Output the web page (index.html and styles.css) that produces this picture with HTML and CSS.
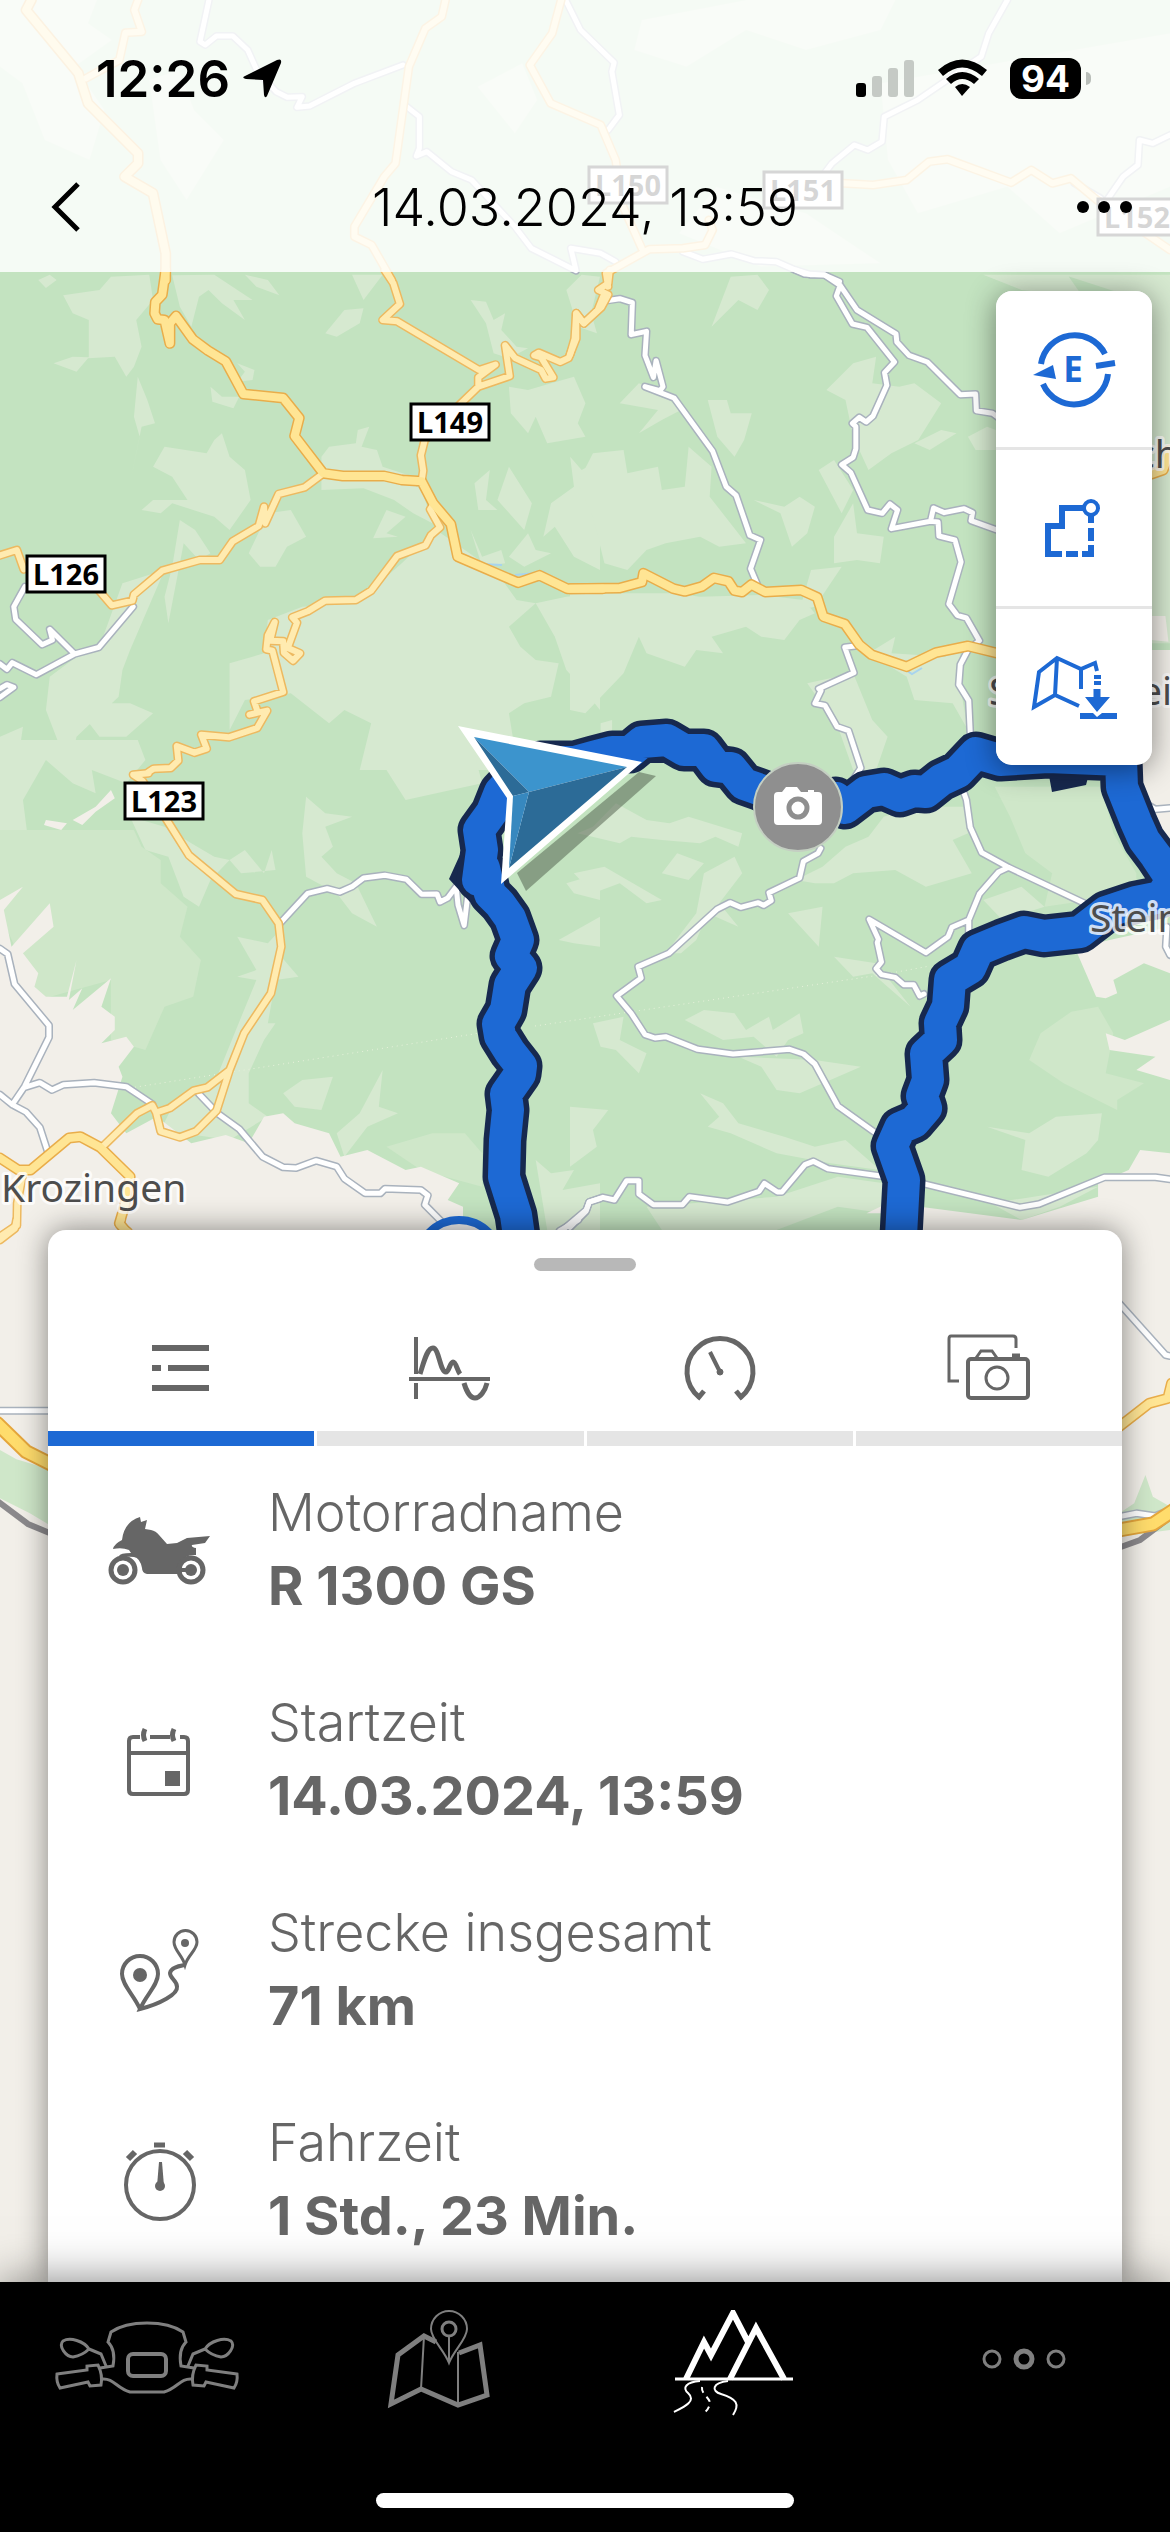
FILE: index.html
```html
<!DOCTYPE html>
<html lang="de">
<head>
<meta charset="utf-8">
<meta name="viewport" content="width=device-width, initial-scale=1">
<title>14.03.2024, 13:59</title>
<link rel="stylesheet" href="styles.css">
</head>
<body>
<div class="app">
  <svg class="map" viewBox="0 0 1170 2532" preserveAspectRatio="xMidYMin slice" role="img" aria-label="Karte">
    <defs>
      <g id="minor">
        <g transform="scale(.7462 .3333)">
          <path d="M280 0L268 125L275 135L290 108L312 108L332 150L345 215L370 275L385 292L405 290L398 322L415 318L475 250L540 195M545 320L562 350L562 445L558 468L572 455L605 515L632 540L690 680L712 745L772 812L765 745L805 760L825 785M758 0L778 90L823 188L820 215L830 345L815 390M1350 0L1325 100L1315 170L1230 300L1185 350L1182 425L1163 450L1145 435L1115 490L1105 520M915 755L942 778L980 762L1010 782L1040 785L1078 822L1105 825L1125 845M1568 405L1545 430L1527 420L1525 495L1505 530L1485 595M1440 550L1475 595"/>
        </g>
        <g transform="translate(0 270) scale(.38265 .33333)">
          <path d="M65 950L36 1010L41 1048L110 1124L137 1110L130 1078L195 1152M348 1010L258 1132L195 1152L95 1214L32 1178L18 1198L0 1182M0 1282L36 1252L18 1244L0 1256"/>
        </g>
        <g transform="translate(570 270) scale(.38265 .33333)">
          <path d="M95 92L130 86L163 98L160 194L200 184L196 256L218 322L225 272L243 350L235 362L196 350L272 384L373 544L408 650L434 676L470 796L498 810L472 896L490 945M590 0L628 14L664 14L706 46L750 120L852 192L854 216L886 256L934 276L1020 374L1060 372L1062 422L1104 430L1140 460M706 46L696 78L738 162L776 172L848 276L822 308L828 346L792 438L774 456L756 442L738 460L747 470L747 536L740 562L710 584L734 608L778 720L816 730L836 702L856 720L840 776L942 754L950 714L978 728L1030 716L1052 728L1048 752L1140 790M942 754L962 756L964 798L1006 810L1022 876L990 1002L1012 1036L1036 1044L1070 1112L1040 1140L1020 1184L1016 1244L1042 1292L1046 1390M745 1128L718 1132L742 1208L650 1256L656 1262L640 1300L666 1306L698 1370L728 1382L760 1494L725 1555"/>
        </g>
        <g transform="translate(0 740) scale(.38265 .33333)">
          <path d="M730 552L804 460L855 446L888 456L920 440L950 414L1006 406L1062 418L1102 463L1142 462L1150 486L1170 474L1192 440L1197 495L1213 556L1222 470M0 626L20 642L38 732L128 856L128 892L64 1040L32 1094M64 1042L104 1028L136 1050L166 1034L246 1028L330 1040L398 1092M0 1064L32 1094L68 1116L104 1162L126 1240M520 1062L568 1120L626 1168L686 1250L740 1282L774 1284L826 1262L880 1280L900 1316L954 1360L994 1360L1006 1346L1100 1350L1118 1366L1110 1394L1160 1452M1460 1480L1532 1410L1540 1386L1568 1376"/>
        </g>
        <g transform="translate(570 740) scale(.38265 .33333)">
          <path d="M655 325L648 340L610 364L600 414L520 458L526 482L506 496L492 488L446 502L418 488L384 508L258 640L178 680L186 714L122 768L160 820L196 884L222 894L250 890L334 928L426 942L574 928L610 942L640 972L700 1098L795 1176M1030 160L1036 180L1046 262L1076 338L1146 382L1345 490M1146 382L1120 396L1070 462L1042 540L1042 580M1042 540L998 562L988 590L930 638L782 538L806 598L803 608L814 666L800 686L814 704L850 712L872 734L898 734L914 768L925 762M1480 175L1530 208L1568 204M1560 560L1557 620L1568 645M0 1462L42 1414L50 1386L86 1372L116 1380L148 1322L180 1322L180 1362L218 1394L294 1394L312 1370L412 1386L494 1354L508 1330L542 1356L554 1356L614 1274L636 1264L674 1286L812 1308M920 1330L1176 1402L1226 1392L1396 1312L1530 1312L1568 1318"/>
        </g>
        <g transform="translate(0 1220) scale(.7462 .3333)">
          <path d="M0 572L70 572M1500 250L1562 405L1568 408M1500 890L1523 880L1548 888L1568 870M750 32L775 0"/>
        </g>
      </g>
      <g id="secondary">
        <g transform="scale(.7462 .3333)">
          <path d="M185 0L180 30L190 95L168 98L160 180L115 235M597 0L592 50L570 85L548 200L530 490L515 530L475 680L475 710L498 735L525 840M752 0L740 100L710 195L738 310L805 375L825 480L835 620L860 745M1130 550L1170 555L1215 540L1245 485L1270 478L1355 548L1382 510L1410 550L1435 535L1470 600L1568 750"/>
          <path d="M950 660L955 690L945 735L915 745L870 748L812 820L815 860"/>
        </g>
        <g transform="translate(0 270) scale(.38265 .33333)">
          <path d="M1005 0L1028 40L1045 102L1000 150L1038 154L1252 300L1295 284L1250 322L1250 350L1205 400L1110 510L1100 556L1106 602L1102 632M1250 350L1332 318L1320 226L1346 264L1414 300L1426 326L1446 322L1414 262L1396 256L1408 248L1464 276L1486 264L1506 206L1506 130L1526 160L1562 120L1576 80M845 610L796 652L728 672L693 760L690 710L676 768L608 814L574 870L522 870L424 902L350 974L346 992L292 1006L250 950M62 898L44 840L0 856M1134 700L1124 718L1150 772L1126 796L1112 826L1038 858L970 962L930 990L850 992L804 1024L764 1042L776 1058L752 1134L784 1150L766 1172L742 1148L740 1114L706 1112L718 1056L700 1096L696 1138L712 1142L740 1266L664 1294L674 1328L698 1322L672 1374L598 1402L526 1394L540 1436L508 1448L462 1428L466 1472L446 1494L402 1496L388 1506M652 1334L674 1328"/>
        </g>
        <g transform="translate(570 270) scale(.38265 .33333)">
          <path d="M104 0L100 40L74 60L100 74L82 112L36 160L16 130L12 206L0 254"/>
        </g>
        <g transform="translate(0 740) scale(.38265 .33333)">
          <path d="M388 100L348 104L372 122L436 240L494 346L616 462L686 480L728 550L735 620L708 760L638 880L600 990L542 1042L506 1052L444 1104L408 1118L398 1096L358 1120L268 1220M600 990L566 1112L512 1174L470 1192L420 1174L408 1118M45 1390L44 1456L0 1490M60 1300L45 1390"/>
        </g>
        <g transform="translate(0 1220) scale(.7462 .3333)">
          <path d="M22 0L20 25L0 60M163 0L160 15L172 34"/>
        </g>
      </g>
      <g id="primary">
        <g transform="scale(.7462 .3333)">
          <path d="M42 0L35 30L105 220L118 310L185 460L185 490L167 530L205 580L222 760L222 840"/>
        </g>
        <g transform="translate(0 270) scale(.38265 .33333)">
          <path d="M433 0L424 74L406 96L404 130L412 148L430 150L444 220L444 160L460 138L504 208L544 242L590 274L636 372L740 384L782 444L770 498L845 610L896 618L1004 618L1050 630L1102 634L1132 700L1178 762L1196 860L1354 938L1410 916L1482 956L1575 956"/>
        </g>
        <g transform="translate(570 270) scale(.38265 .33333)">
          <path d="M0 956L130 954L188 936L192 910L270 956L300 964L344 950L376 924L414 934L430 962L450 966L474 944L510 966L604 960L646 982L662 1040L718 1062L756 1124L788 1154L880 1190L956 1148L1040 1128L1140 1156M1520 612L1550 600L1560 570L1566 540"/>
        </g>
        <g transform="translate(0 740) scale(.38265 .33333)">
          <path d="M0 1254L48 1290L80 1290L180 1194L210 1190L262 1222L340 1310L325 1400L312 1450L330 1475"/>
        </g>
        <g transform="translate(0 1220) scale(.7462 .3333)">
          <path d="M1500 620L1540 550L1565 535L1570 490"/>
        </g>
      </g>
      <g id="trunk" transform="translate(0 1220) scale(.7462 .3333)">
        <path d="M-4 610L35 695L75 740M1500 930L1545 912L1572 872"/>
      </g>
      <path id="route" d="M519 1236L516 1215L504 1177L505 1140L508 1110L506 1094L520 1074L521 1066L510 1052L500 1036L498 1024L506 1010L510 985L521 968L511 956L518 940L510 918L500 904L490 894L484 868L478 880L482 850L479 830L492 812L500 792L515 776L540 762L575 762L593 757L612 752L630 752L642 742L667 740L684 750L704 750L716 766L731 768L744 784L761 790L800 810L822 808L836 798L845 808L866 792L884 789L900 796L914 791L926 792L941 780L958 772L976 753L1000 760L1048 757L1121 760L1122 787L1136 822L1144 840L1156 856L1172 880L1161 897L1136 902L1106 912L1080 932L1044 936L1024 932L1002 940L978 950L970 968L950 980L948 1006L940 1023L941 1040L926 1054L928 1080L922 1096L926 1108L914 1122L900 1128L892 1146L904 1180L901 1236"/>
    </defs>

    <rect class="forest" width="1170" height="2532"/>

    <g class="grove">
      <g transform="scale(.7462 .3333)">
        <path d="M0 0H130L118 70L150 120L100 200L140 330L120 480L60 420L30 250L0 200ZM200 240L240 210L260 330L300 420L250 600L215 480ZM640 260L700 190L720 300L690 400ZM860 60L1000 0H1200L1180 90L1080 150L1000 90L920 200L850 150ZM1180 250L1568 100V560L1420 700L1350 560L1230 640L1190 480ZM960 560L1080 640L1180 790L1020 800L910 700Z"/>
      </g>
      <g transform="translate(0 270) scale(.38265 .33333)">
        <path d="M165 76L260 60L290 20L390 14L400 90L356 150L370 230L350 290L330 320L300 260L230 265L200 305L140 280L190 260L232 262V150L190 130ZM100 30L130 14L148 30L120 54ZM450 16L560 14L660 90L610 90L640 150L580 100L545 60L520 80L500 170L470 110ZM640 14L700 30L730 76L670 50ZM850 190L900 120L950 115L940 160L880 200ZM920 14L1000 14L950 90ZM360 320L385 390L405 460L370 470L340 640L365 500L350 440ZM370 720L400 690L490 690L450 620L400 590L430 530L540 550L560 510L580 490L600 560L640 600L655 690L600 780L560 740L450 700L420 730ZM550 350L580 380L625 380L610 415L555 395ZM620 280L665 300L660 330L620 335L640 305ZM840 660L840 560L860 530L930 520L935 480L965 470L945 530L985 540L1000 590L1080 620L1090 660L1040 650ZM1230 90L1270 95L1290 150L1320 130L1310 180L1350 230L1380 235L1330 265L1290 250L1270 160ZM1330 350L1380 360L1440 340L1500 320L1530 400L1510 460L1530 500L1430 520L1400 440L1380 490L1335 430ZM1480 60L1520 14L1568 20L1545 130L1560 190L1510 170ZM1240 640L1280 600L1270 690L1300 720L1250 720ZM1330 590L1390 700L1370 780L1300 690ZM700 730L760 720L800 800L750 830L720 890L680 890L650 850ZM940 650L1100 650L1130 760L1080 730L1030 690ZM1010 720L1060 740L1010 790L1040 800L975 805ZM470 750L510 780L550 850L520 870L480 820L450 1000L440 1060L430 980L450 890ZM320 940L430 900L340 1140L320 1200L310 1280L200 1400L180 1500L120 1320L130 1220L200 1160L260 1130ZM1140 780L1240 860L1300 910L1350 990L1400 1000L1330 1070L1360 1130L1400 1170L1460 1180L1440 1280L1370 1300L1330 1330L1340 1400L1280 1500H940L970 1360L900 1320L860 1360L760 1270L640 1290L600 1380L600 1180L690 1150L700 1050L790 1010L930 1000L1050 880ZM1230 780L1260 860L1310 840L1320 880L1260 890ZM1330 860L1380 790L1400 840L1440 850L1370 890ZM1490 560L1520 600L1568 570V900L1500 860L1450 770L1420 800L1440 700L1500 650ZM1400 1000L1480 980L1568 970V1320L1520 1250L1480 1200L1450 1100ZM0 1400L60 1370L50 1450L0 1500ZM230 1260L280 1300L340 1300L400 1330L330 1400L260 1400L220 1340Z"/>
      </g>
      <g transform="translate(570 270) scale(.38265 .33333)">
        <path d="M420 20L490 14L520 60L490 120L440 90L370 170L390 110ZM130 400L180 340L230 360L290 420L240 450L180 490L230 420ZM360 390L410 390L420 430L475 430L455 510L430 560L385 500ZM60 550L140 540L150 610L230 590L240 660L300 650L310 530L370 590L365 680L460 820L390 830L340 800L250 820L200 840L150 900L90 880L60 740L20 640ZM480 690L560 710L600 680L640 710L620 790L580 830L550 730ZM670 360L740 280L800 260L790 340L860 350L900 340L970 400L910 510L840 550L780 600L740 500L720 390ZM900 520L970 480L1010 490L940 540ZM1040 500L1090 470L1113 480V540L1060 540ZM650 600L690 570L740 660L710 730ZM690 800L740 700L750 790L820 800L810 880L750 870L690 880ZM0 970H270L340 980L500 975L610 990L640 1030L600 1050L560 1110L500 1100L460 1070L370 1100L400 1150L330 1140L300 1190L200 1150L180 1100L140 1210L40 1330L0 1320ZM780 1150L850 1100L840 1150L980 1160L1020 1130V1250L1040 1380L1000 1300L900 1290L880 1220ZM620 1240L740 1210L790 1350L830 1400L800 1500H740L700 1370ZM80 1360L110 1350V1400L80 1400ZM630 900L710 890L640 1010L600 1020ZM1080 14L1300 14L1340 80L1180 60ZM1290 14H1568V1120H1520V100Z"/>
      </g>
      <g transform="translate(0 740) scale(.38265 .33333)">
        <path d="M0 0H360L380 60L330 130L240 90L250 160L190 130L120 60L60 180L70 270L0 270ZM340 230L430 260L500 310L560 350L600 360L550 420L520 500L480 470L440 350L380 330ZM600 360L640 330L690 400L710 330L720 390L630 400ZM790 280L800 170L850 220L920 230L850 260L870 320L840 350L880 400L930 430L985 560L920 520L880 460L800 410ZM620 590L700 610L740 560L735 650L780 710L720 720L700 850L720 850L690 900L650 1000L650 1090L700 1130L600 1200L420 1170L450 1100L560 1030L620 860L670 720L620 710L670 690ZM740 1060L790 1020L870 1010L840 1110L770 1100ZM940 1120L1000 990L990 1100L1040 1120L960 1160L900 1250L880 1180ZM960 0H1230L1260 130L1140 160L1060 180L1010 90ZM1480 430L1568 400V480L1500 460ZM1460 600L1568 530V620L1500 610ZM1400 1260L1440 1300L1500 1290L1470 1350L1568 1330V1470H1430Z"/>
      </g>
      <g transform="translate(570 740) scale(.38265 .33333)">
        <path d="M20 280L60 260L120 190L200 240L260 250L310 230L450 280L440 320L380 290L340 310L240 300L160 290L130 310ZM240 400L280 340L350 370L310 420ZM10 400L90 380L240 480L200 490L130 430L60 460ZM350 400L430 350L450 400L390 490L440 560L360 520L330 600L290 640L250 640L330 520ZM590 420L660 380L720 320L780 290L820 230L900 200L1030 200L1040 280L1000 300L1050 400L930 440L850 390L740 400L690 430L640 430ZM570 520L660 500L650 620L610 570ZM690 650L800 670L890 800L830 740L790 700L740 710ZM60 850L140 830L130 900L200 940L180 1000L120 930L80 920ZM300 840L350 810L430 820L460 870L520 830L530 870L600 820L610 880L570 900L540 950L480 890L400 900ZM440 950L640 960L760 980L700 1010L600 1060L540 1050L500 980ZM340 1060L400 1090L440 1150L560 1190L640 1220L720 1200L810 1290L680 1270L540 1240L420 1180L360 1160L390 1130ZM0 1100L100 1110L60 1170L70 1220L0 1280ZM1090 1160L1200 1180L1270 1130L1390 1120L1380 1200L1350 1240L1250 1310L1180 1290L1190 1200ZM200 1400L540 1370L700 1310L820 1330V1420L700 1400L540 1470H240ZM1080 480L1180 440L1240 500L1130 540ZM1100 1390L1380 1340L1280 1400L1180 1440Z"/>
      </g>
    </g>

    <g class="wood">
      <g transform="translate(0 740) scale(.38265 .33333)">
        <path d="M0 270H350L370 320L420 360L420 430L490 500L470 590L525 660L505 770L430 800L380 930L290 900V720L100 780L0 520Z"/>
        <path d="M1010 1220L1130 1180L1215 1180L1260 1240V1340L1100 1290Z"/>
      </g>
      <g transform="translate(570 740) scale(.38265 .33333)">
        <path d="M1110 140L1390 140L1420 280L1480 400V460L1240 500L1260 400L1190 340L1150 230ZM1230 880L1310 815L1380 800L1420 880L1400 1000L1500 1030L1430 1080V1110L1290 1030L1200 960Z"/>
      </g>
    </g>

    <g class="land">
      <rect y="1244" width="1170" height="1288"/>
      <g transform="translate(0 740) scale(.38265 .33333)">
        <path d="M0 480L60 440L10 510L30 620L130 490L140 560L60 640L100 700L90 740L120 770L175 770L200 660L180 780L215 745L190 810L290 715L265 800L300 830L300 870L265 910L330 890L350 920L310 980L320 1010L290 1120L330 1180L410 1130L500 1210L590 1185L650 1210L690 1130L740 1120L770 1150L860 1180L890 1250L960 1230L1060 1290L1100 1280L1200 1330L1170 1380L1210 1400L1210 1520H0ZM190 240L250 200L290 150L300 175L250 215L215 255ZM120 240L175 250L160 270L115 255Z"/>
      </g>
      <g transform="translate(570 740) scale(.38265 .33333)">
        <path d="M1320 625L1410 600L1568 560V700L1500 670L1420 720L1430 760L1400 775L1375 770ZM1490 0H1568V380L1520 300L1480 150ZM1400 880L1450 900L1568 840V1020L1480 990L1530 950L1410 930ZM775 1420L830 1390V1420ZM915 1400L1180 1440L1380 1370V1330L1460 1290L1490 1230L1568 1240V1520H915Z"/>
      </g>
      <g transform="translate(570 270) scale(.38265 .33333)">
        <path d="M1520 1038H1556L1564 1115L1520 1110ZM1520 1140H1568V1420L1520 1440Z"/>
      </g>
    </g>
    <g class="wood" transform="translate(0 1220) scale(.7462 .3333)">
      <path d="M0 690L22 718L70 750V920L40 880L0 835ZM1500 880L1520 850L1535 765L1545 830L1568 860V930L1500 950Z"/>
    </g>

    <path class="stream" d="M482 564l20 1M515 575l30-3M900 666l12 8 10-6"/>
    <path class="border-line" d="M130 1088L480 1033M535 1026L880 975L930 966"/>
    <path class="rail" d="M-4 1500L28 1524L52 1534M1118 1548L1140 1540L1172 1516"/>

    <use href="#minor" class="minor-case"/>
    <use href="#minor" class="minor-fill"/>
    <use href="#secondary" class="secondary-case"/>
    <use href="#primary" class="primary-case"/>
    <use href="#secondary" class="secondary-fill"/>
    <use href="#primary" class="primary-fill"/>
    <use href="#trunk" class="trunk-case"/>
    <use href="#trunk" class="trunk-fill"/>

    <g class="shield">
      <rect x="589" y="167" width="78" height="36"/><text x="628" y="196">L150</text>
      <rect x="764" y="172" width="78" height="36"/><text x="803" y="201">L151</text>
      <rect x="1098" y="199" width="78" height="36"/><text x="1137" y="228">L152</text>
      <rect x="411" y="404" width="78" height="36"/><text x="450" y="433">L149</text>
      <rect x="27" y="556" width="78" height="36"/><text x="66" y="585">L126</text>
      <rect x="125" y="783" width="78" height="36"/><text x="164" y="812">L123</text>
    </g>

    <path class="route-mark" d="M463 848L449 879L470 902L490 902L490 848ZM1048 770L1052 792L1086 785L1090 770Z"/>
    <use href="#route" class="route-case"/>
    <use href="#route" class="route-fill"/>

    <g class="place">
      <text x="1" y="1202">Krozingen</text>
      <text x="1136" y="468">ch</text>
      <text x="989" y="705">S</text>
      <text x="1140" y="705">ei</text>
      <text x="1090" y="932">Stein</text>
    </g>

    <circle class="start" cx="459" cy="1262" r="42"/>

    <path class="pointer-shadow" d="M517 873L526 891L656 776L639 772Z"/>
    <path fill="#fff" d="M458 726L642 762L501 884L507 798Z"/>
    <path fill="#3c94cd" d="M474 737L627 767L529 792Z"/>
    <path fill="#2c6b97" d="M627 767L509 868L529 792ZM474 737L529 792L513 796Z"/>
    <path fill="#3788bf" d="M513 796L529 792L509 868Z"/>

    <circle cx="798" cy="807" r="44" fill="#8f8f8f" stroke="#c4cfc2" stroke-width="2"/>
    <path fill="#fff" d="M778 792h4l4-5h11l4 5h7v-2h6v2h4q4 0 4 4v25q0 4-4 4h-40q-4 0-4-4v-25q0-4 4-4z"/>
    <circle cx="798" cy="808" r="9" fill="#fff" stroke="#8f8f8f" stroke-width="5"/>
  </svg>

  <header class="top">
    <div class="status">
      <time class="clock">12:26</time>
      <svg width="40" height="40" viewBox="241 58 40 40" aria-hidden="true"><path d="M276 60q5-2 4 3l-14 33q-2 3-3-1l-1-15-17-1q-5-1-1-3z"/></svg>
      <svg class="signal" width="60" height="40" viewBox="855 57 60 40" aria-hidden="true">
        <rect x="856" y="82" width="10" height="14" rx="3"/>
        <g fill="#c5cac5"><rect x="872" y="75" width="10" height="21" rx="3"/><rect x="888" y="67" width="10" height="29" rx="3"/><rect x="904" y="59" width="10" height="37" rx="3"/></g>
      </svg>
      <svg width="52" height="40" viewBox="936 58 52 40" aria-hidden="true">
        <path d="M937 70Q961 49 986 70L981 76Q961 59 942 76ZM945 79Q961 65 978 79L973 84Q961 74 950 84ZM954 87Q961 81 969 87L961 96Z"/>
      </svg>
      <div class="battery">94</div>
    </div>
    <div class="bar">
      <button class="icon-button" type="button" aria-label="Zurück">
        <svg width="40" height="52" viewBox="46 181 40 52"><path d="M78 184L55 207L78 230" fill="none" stroke="#000" stroke-width="5"/></svg>
      </button>
      <h1>14.03.2024, 13:59</h1>
      <button class="icon-button" type="button" aria-label="Mehr">
        <svg width="56" height="20" viewBox="1076 197 56 20"><circle cx="1083" cy="207" r="6"/><circle cx="1104" cy="207" r="6"/><circle cx="1126" cy="207" r="6"/></svg>
      </button>
    </div>
  </header>

  <main>
    <div class="tools">
      <button type="button" aria-label="Ausrichtung Ost">
        <svg viewBox="0 0 156 156" fill="none" stroke="#1d69d4">
          <path stroke-width="6" d="M45 73A34 34 0 0 1 109 63M112 83A34 34 0 0 1 47 93"/>
          <path stroke-width="6" d="M100 75L119 72"/>
          <path fill="#1d69d4" stroke="none" d="M37 84L57 74L60 88Z"/>
          <text x="77" y="91">E</text>
        </svg>
      </button>
      <button type="button" aria-label="Routenabschnitt">
        <svg viewBox="0 0 156 156" fill="none" stroke="#1d69d4" stroke-width="6">
          <path d="M66 104H52V76H66V58H88M70 104H82M86 104H95V95M95 91V78M95 73V65"/>
          <circle cx="95" cy="58" r="7" stroke-width="4"/>
        </svg>
      </button>
      <button type="button" aria-label="Karte herunterladen">
        <svg viewBox="0 0 156 156" fill="none" stroke="#1d69d4" stroke-width="4">
          <path d="M101 62L99 54L85 60L61 49L43 63L38 98L59 86L83 97M61 49L59 86M85 60V80M98 68H105M98 74H105"/>
          <path stroke-width="7" d="M101 80V90"/>
          <path fill="#1d69d4" stroke="none" d="M89 88H114L101 103ZM84 104H97L101 108L106 104H121V110H84Z"/>
        </svg>
      </button>
    </div>

    <section class="sheet">
      <div class="handle"></div>
      <div class="tabs" role="tablist">
        <button type="button" role="tab" aria-selected="true" aria-label="Details">
          <svg viewBox="131 320 100 100"><path d="M152 348H209M152 368H161M168 368H209M152 388H209" stroke-width="6"/></svg>
        </button>
        <button type="button" role="tab" aria-selected="false" aria-label="Verlauf">
          <svg viewBox="400 320 100 100"><path d="M416 337V374M416 383V399M409 379H490" stroke-width="4"/><path d="M420 374C424 362 427 348 433 348S440 372 446 372C449 372 450 362 453 362S457 370 460 374M464 383C466 390 470 398 475 398S485 391 487 383" stroke-width="5"/></svg>
        </button>
        <button type="button" role="tab" aria-selected="false" aria-label="Tempo">
          <svg viewBox="670 320 100 100"><path d="M704 391L699 397A33 33 0 1 1 741 397L736 391" stroke-width="5"/><path d="M710 352L720 372" stroke-width="4"/><circle cx="720" cy="372" r="3" fill="#666"/></svg>
        </button>
        <button type="button" role="tab" aria-selected="false" aria-label="Fotos">
          <svg viewBox="939 320 100 100"><path d="M1016 348V339Q1016 336 1013 336H951Q949 336 949 339V381H959" stroke-width="3"/><rect x="968" y="359" width="60" height="39" rx="3" stroke-width="4"/><circle cx="997" cy="378" r="11" stroke-width="3"/><path d="M976 358L981 351H992L997 358" stroke-width="3"/><path d="M1012 356H1020" stroke-width="5"/></svg>
        </button>
      </div>
      <dl class="facts">
        <div>
          <svg viewBox="103 494 110 110" aria-hidden="true">
            <path fill="#666" d="M140 517L141 522L147 520L145 529L151 530Q156 531 159 535L167 544L177 543L187 538L210 536L205 543L192 545Q191 547 196 548V555Q185 554 181 563L179 574H147Q142 573 142 568Q140 558 134 557L119 556Q120 553 131 553L129 550Q122 547 113 549Q114 544 122 540Q124 522 140 517Z"/>
            <circle cx="123" cy="570" r="12" fill="#fff" stroke="#666" stroke-width="5"/><circle cx="123" cy="570" r="6" fill="#666"/>
            <circle cx="191" cy="570" r="12" fill="#fff" stroke="#666" stroke-width="5"/><circle cx="191" cy="570" r="6" fill="#666"/><path d="M180 570H191" stroke="#666" stroke-width="4"/>
          </svg>
          <dt>Motorradname</dt><dd>R 1300 GS</dd>
        </div>
        <div>
          <svg viewBox="103 704 110 110" fill="none" stroke="#666" stroke-width="4" aria-hidden="true">
            <path d="M140 737H133Q129 737 129 741V790Q129 794 133 794H184Q188 794 188 790V741Q188 737 184 737H180M150 737H170M129 753H188"/><path stroke-width="5" d="M145 729Q142 735 145 741M174 729Q171 735 174 741"/><rect x="165" y="771" width="15" height="15" fill="#666" stroke="none"/>
          </svg>
          <dt>Startzeit</dt><dd>14.03.2024, 13:59</dd>
        </div>
        <div>
          <svg viewBox="103 914 110 110" fill="none" stroke="#666" stroke-width="4" aria-hidden="true">
            <path d="M140 1009C134 995 122 985 122 974A18 18 0 0 1 158 974C158 985 146 995 140 1009C160 1004 178 994 177 987C177 980 170 979 170 973C171 967 180 966 185 965"/>
            <path stroke-width="3" d="M185 965C182 955 174 950 174 942A11 11 0 0 1 197 942C197 950 188 955 185 965Z"/>
            <circle cx="140" cy="975" r="7" fill="#666" stroke="none"/><circle cx="185" cy="943" r="4" fill="#666" stroke="none"/>
          </svg>
          <dt>Strecke insgesamt</dt><dd>71 km</dd>
        </div>
        <div>
          <svg viewBox="103 1124 110 110" fill="none" stroke="#666" stroke-width="4" aria-hidden="true">
            <circle cx="160" cy="1185" r="34"/><path stroke-width="5" d="M154 1145H165"/><path stroke-width="6" d="M128 1159L135 1152M192 1159L185 1152"/><path fill="#666" stroke="none" d="M159 1162H162L164 1186H157Z"/><circle cx="160" cy="1186" r="5" fill="#666" stroke="none"/>
          </svg>
          <dt>Fahrzeit</dt><dd>1 Std., 23 Min.</dd>
        </div>
      </dl>
    </section>
  </main>

  <nav class="dock">
    <a href="#cockpit" aria-label="Cockpit">
      <svg viewBox="51 310 190 110">
        <g id="half"><path d="M147 323Q124 323 111 332L108 342Q116 350 113 366L100 368M106 366L101 354L89 349M89 349C84 341 70 337 63 341C58 346 66 357 73 357C79 356 84 354 89 349ZM57 374L87 370V366L98 365Q103 375 101 385L90 386L88 382L60 388Q56 382 57 374ZM102 379C114 378 116 388 130 392H147"/></g>
        <use href="#half" transform="translate(294) scale(-1 1)"/>
        <rect x="128" y="354" width="38" height="22" rx="5" stroke-width="4"/>
      </svg>
    </a>
    <a href="#karte" aria-label="Karte">
      <svg viewBox="344 308 190 110"><path stroke-width="5" d="M436 340L424 334L398 353L391 402L421 387L458 403L487 393L480 343L459 351"/><path stroke-width="2" d="M424 334L421 387M458 350V403M449 334V360M449 361C444 348 431 337 431 327A18 18 0 0 1 467 327C467 337 454 348 449 361Z"/><circle cx="449" cy="327" r="7"/></svg>
    </a>
    <a href="#touren" aria-label="Touren" aria-current="page">
      <svg viewBox="636 310 190 110"><path stroke-width="6" d="M686 379L704 342L711 355L733 313L748 342M730 379L756 328L784 379"/><path d="M675 379H793"/><path stroke-width="2" d="M700 381C686 382 682 388 688 393C697 401 684 407 674 412M728 381C712 383 711 391 721 394C737 399 740 404 733 415"/><path stroke-width="2" stroke-dasharray="6 5" d="M702 387C701 394 710 398 710 403Q709 409 705 412"/></svg>
    </a>
    <a href="#mehr" aria-label="Mehr">
      <svg viewBox="929 310 190 110"><circle cx="992" cy="359" r="8"/><circle cx="1024" cy="359" r="8" stroke-width="5"/><circle cx="1056" cy="359" r="8"/></svg>
    </a>
    <div class="home"></div>
  </nav>
</div>
</body>
</html>
```
FILE: styles.css
```css
* { box-sizing: border-box; }

body {
  margin: 0;
  font-family: Inter, "Liberation Sans", sans-serif;
  color: #666;
  background: #000;
}

button {
  border: 0;
  padding: 0;
  background: none;
  font: inherit;
  color: inherit;
}

svg { display: block; }

.app {
  position: relative;
  min-height: 100vh;
  display: flex;
  flex-direction: column;
  overflow: hidden;
}

/* Map canvas behind everything */
.map {
  position: absolute;
  inset: 0;
  width: 100%;
  height: 100%;
}
.map path { vector-effect: non-scaling-stroke; }
.map use { fill: none; stroke-linejoin: round; stroke-linecap: round; }
.forest { fill: #c3e3c0; }
.grove { fill: #d6e9d0; }
.wood { fill: #cfe7c9; }
.land { fill: #f2efe9; }
.stream { fill: none; stroke: #a8d4ee; stroke-width: 2; }
.border-line { fill: none; stroke: #e8f2dc; stroke-width: 1; stroke-dasharray: 1 4; }
.rail { fill: none; stroke: #8b898c; stroke-width: 6; }
.minor-case { stroke: #a9b2bd; stroke-width: 8; }
.minor-fill { stroke: #fff; stroke-width: 5; }
.secondary-case { stroke: #edb960; stroke-width: 9; }
.secondary-fill { stroke: #ffebb0; stroke-width: 6; }
.primary-case { stroke: #e9ad4a; stroke-width: 11; }
.primary-fill { stroke: #ffe594; stroke-width: 8; }
.trunk-case { stroke: #e5a63c; stroke-width: 15; }
.trunk-fill { stroke: #ffdc6c; stroke-width: 11; }
.route-case { stroke: #17294f; stroke-width: 43; }
.route-mark { fill: #17294f; }
.route-fill { stroke: #1d69d4; stroke-width: 32; }
.start { fill: #eee; stroke: #1d69d4; stroke-width: 8; }
.pointer-shadow { fill: #4b5a48; fill-opacity: .5; }
.shield rect { fill: #fff; stroke: #000; stroke-width: 3; }
.shield text {
  font: 700 29px "Noto Sans", sans-serif;
  text-anchor: middle;
  fill: #000;
}
.place text {
  font: 39px "Noto Sans", sans-serif;
  fill: #4d4d4d;
  stroke: #fff;
  stroke-opacity: .8;
  stroke-width: 6;
  stroke-linejoin: round;
  paint-order: stroke;
}

/* Status bar and title */
.top {
  position: relative;
  height: 272px;
  color: #000;
  background: rgba(255, 255, 255, .84);
}
.status {
  display: flex;
  align-items: center;
  height: 156px;
  padding: 0 89px 0 96px;
}
.clock {
  margin-right: 12px;
  font-size: 51px;
  font-weight: 600;
}
.signal { margin-left: auto; margin-right: 22px; }
.battery {
  position: relative;
  width: 71px;
  height: 41px;
  margin-left: 21px;
  border-radius: 12px;
  background: #000;
  color: #fff;
  font-size: 37px;
  font-weight: 700;
  line-height: 41px;
  text-align: center;
}
.battery::after {
  content: "";
  position: absolute;
  left: 76px;
  top: 14px;
  width: 5px;
  height: 13px;
  border-radius: 0 6px 6px 0;
  background: #b9beb9;
}
.bar {
  display: flex;
  align-items: center;
  justify-content: space-between;
  height: 102px;
  padding: 0 38px;
}
.bar h1 {
  margin: 0;
  font-size: 52px;
  font-weight: 300;
}
.icon-button {
  display: grid;
  place-items: center;
  width: 56px;
  height: 88px;
}

main {
  position: relative;
  flex: 1;
  display: flex;
  flex-direction: column;
  justify-content: space-between;
  padding: 19px 18px 0 48px;
}

/* Map tools */
.tools {
  align-self: flex-end;
  display: grid;
  gap: 3px;
  width: 156px;
  overflow: hidden;
  border-radius: 16px;
  background: #e5e5e5;
  box-shadow: 0 4px 30px rgba(0, 0, 0, .45);
}
.tools button { background: #fff; }
.tools text {
  font: 700 35px "Open Sans", sans-serif;
  text-anchor: middle;
  fill: #1d69d4;
  stroke: none;
}

/* Bottom sheet */
.sheet {
  margin-right: 30px;
  border-radius: 18px 18px 0 0;
  background: #fff;
  box-shadow: 0 0 30px rgba(0, 0, 0, .45);
}
.handle {
  width: 102px;
  height: 13px;
  margin: 28px auto 0;
  border-radius: 7px;
  background: #b8b8b8;
}
.tabs {
  display: grid;
  grid-template-columns: repeat(4, 1fr);
  gap: 3px;
  margin-top: 49px;
}
.tabs button {
  height: 126px;
  border-bottom: 15px solid #e5e5e5;
}
.tabs button[aria-selected="true"] { border-color: #1d69d4; }
.tabs svg {
  width: 100px;
  height: 100px;
  margin: 0 auto 11px;
  fill: none;
  stroke: #666;
}
.facts {
  margin: 0;
  padding: 30px 0 20px;
}
.facts div {
  display: grid;
  grid-template-columns: 220px 1fr;
  align-items: center;
  margin-bottom: 64px;
}
.facts div:last-child { margin-bottom: 10px; }
.facts svg {
  grid-row: 1 / 3;
  justify-self: center;
  width: 110px;
}
.facts dt, .facts dd {
  margin: 0;
  line-height: 73px;
}
.facts dt { font-size: 52px; font-weight: 300; }
.facts dd { font-size: 54px; font-weight: 700; }

/* Bottom navigation */
.dock {
  position: relative;
  display: grid;
  grid-template-columns: repeat(4, 1fr);
  justify-items: center;
  row-gap: 73px;
  padding: 28px 0 24px;
  background: #000;
  box-shadow: 0 0 44px rgba(0, 0, 0, .5);
}
.dock svg {
  width: 190px;
  height: 110px;
  fill: none;
  stroke: #7f7f7f;
  stroke-width: 3;
}
.dock a[aria-current] svg { stroke: #fff; }
.home {
  grid-column: 1 / -1;
  width: 418px;
  height: 15px;
  border-radius: 8px;
  background: #fff;
}
```
